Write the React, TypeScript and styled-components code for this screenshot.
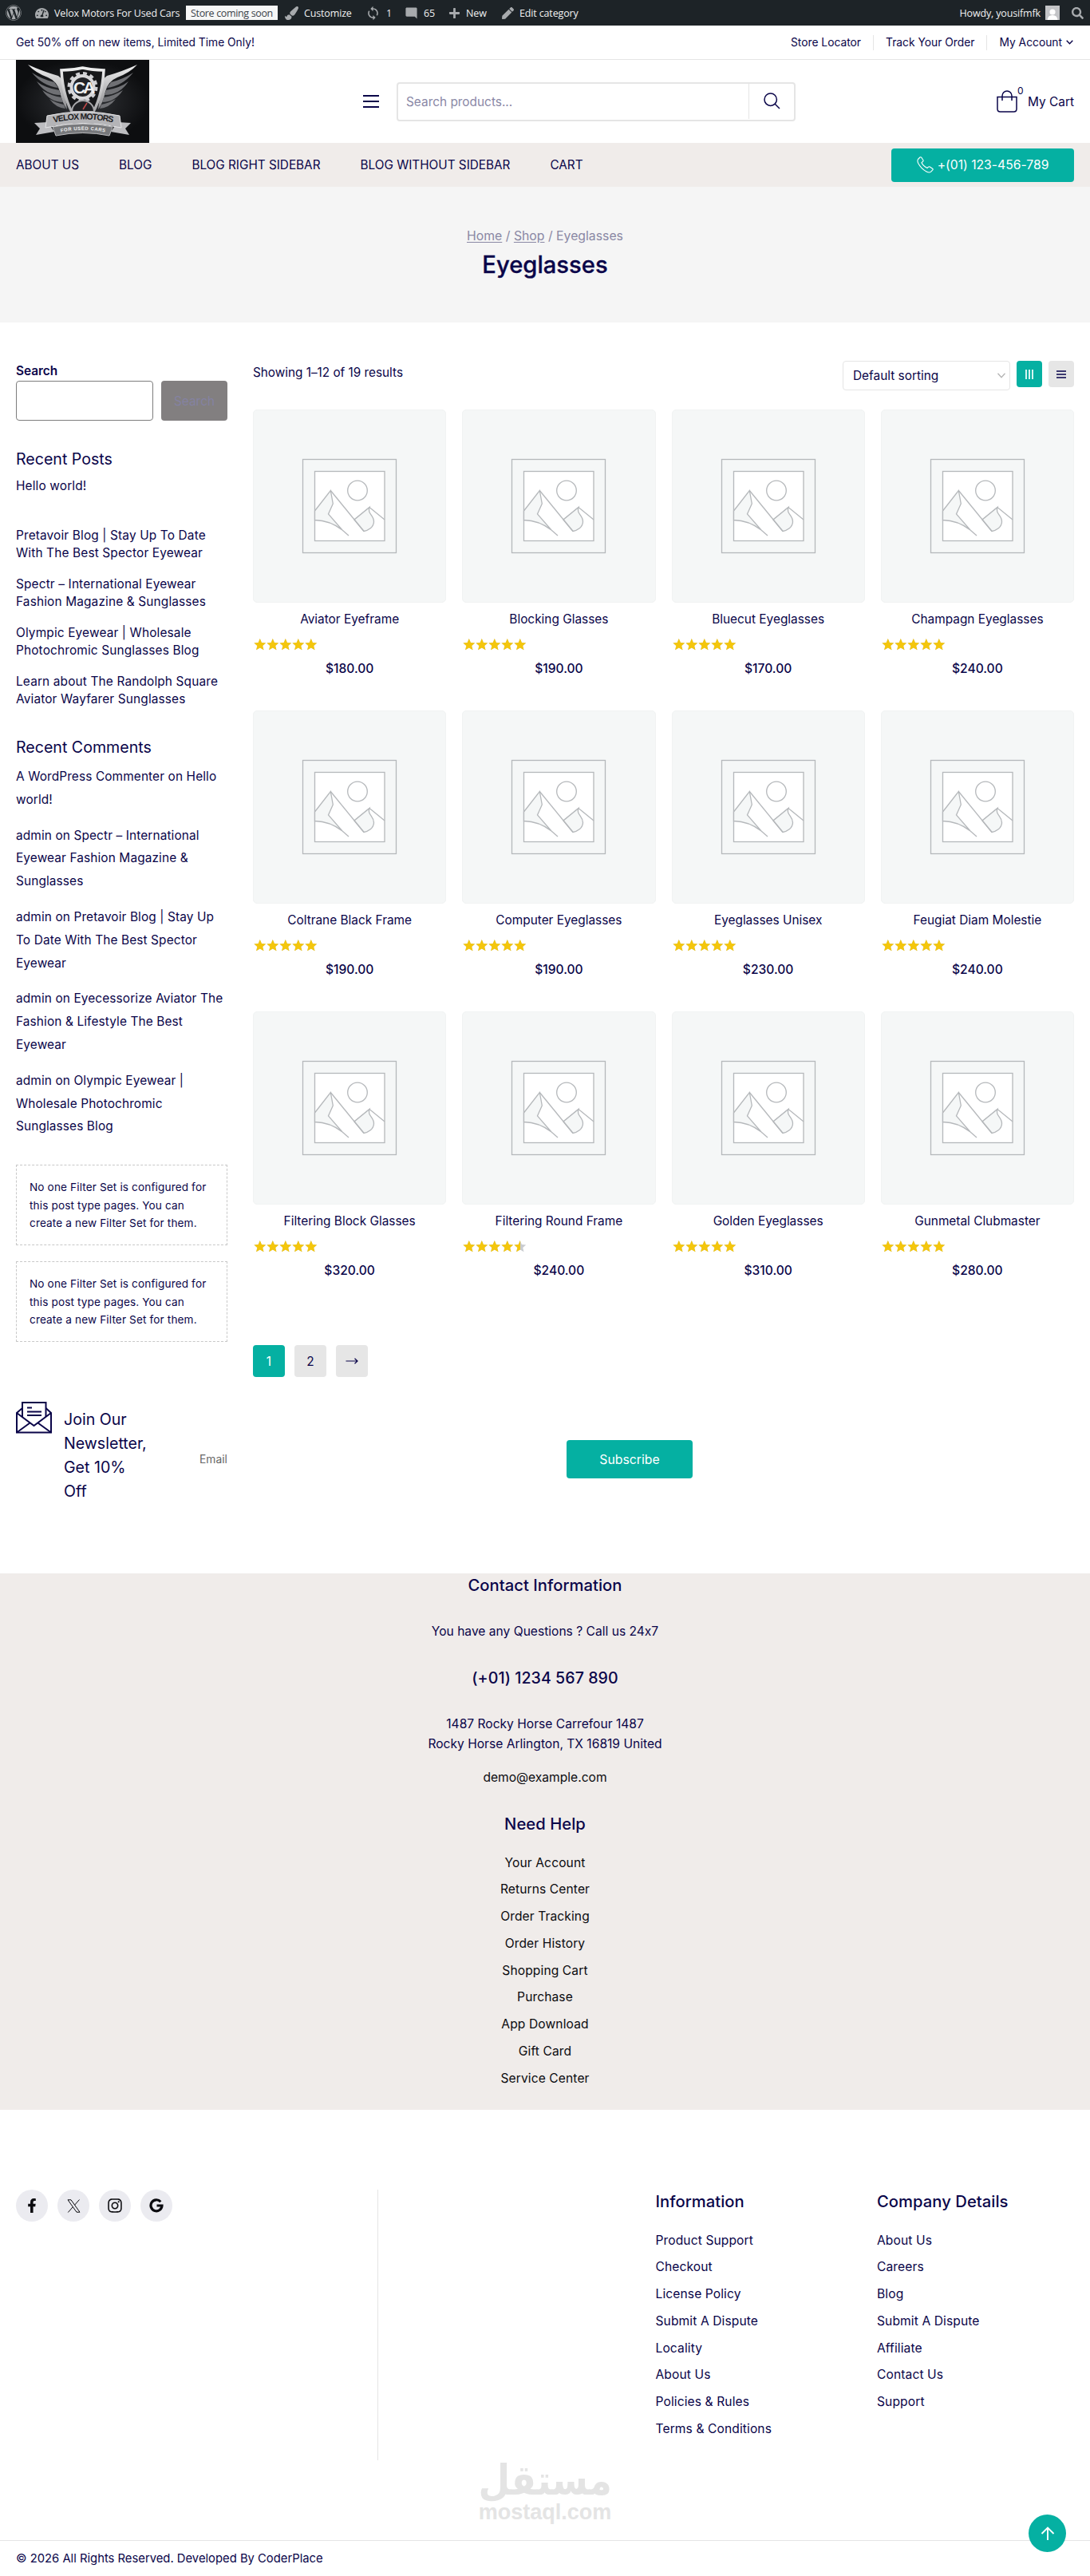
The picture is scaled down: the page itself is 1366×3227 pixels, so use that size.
import type { ReactNode } from "react";
import styled, { createGlobalStyle } from "styled-components";
import {
  FaWordpress,
  FaTachometerAlt,
  FaPaintBrush,
  FaPlus,
  FaPen,
  FaSearch,
  FaFacebookF,
  FaInstagram,
} from "react-icons/fa";
import { MdSync, MdModeComment } from "react-icons/md";

interface Product {
  id: number;
  name: string;
  price: number;
  rating: number;
}

const products: Product[] = [
  { id: 1, name: "Aviator Eyeframe", price: 180, rating: 5 },
  { id: 2, name: "Blocking Glasses", price: 190, rating: 5 },
  { id: 3, name: "Bluecut Eyeglasses", price: 170, rating: 5 },
  { id: 4, name: "Champagn Eyeglasses", price: 240, rating: 5 },
  { id: 5, name: "Coltrane Black Frame", price: 190, rating: 5 },
  { id: 6, name: "Computer Eyeglasses", price: 190, rating: 5 },
  { id: 7, name: "Eyeglasses Unisex", price: 230, rating: 5 },
  { id: 8, name: "Feugiat Diam Molestie", price: 240, rating: 5 },
  { id: 9, name: "Filtering Block Glasses", price: 320, rating: 5 },
  { id: 10, name: "Filtering Round Frame", price: 240, rating: 4.5 },
  { id: 11, name: "Golden Eyeglasses", price: 310, rating: 5 },
  { id: 12, name: "Gunmetal Clubmaster", price: 280, rating: 5 },
];

const menu = ["ABOUT US", "BLOG", "BLOG RIGHT SIDEBAR", "BLOG WITHOUT SIDEBAR", "CART"];

const posts = [
  ["Pretavoir Blog | Stay Up To Date", "With The Best Spector Eyewear"],
  ["Spectr – International Eyewear", "Fashion Magazine & Sunglasses"],
  ["Olympic Eyewear | Wholesale", "Photochromic Sunglasses Blog"],
  ["Learn about The Randolph Square", "Aviator Wayfarer Sunglasses"],
];

const comments = [
  ["A WordPress Commenter on Hello", "world!"],
  ["admin on Spectr – International", "Eyewear Fashion Magazine &", "Sunglasses"],
  ["admin on Pretavoir Blog | Stay Up", "To Date With The Best Spector", "Eyewear"],
  ["admin on Eyecessorize Aviator The", "Fashion & Lifestyle The Best", "Eyewear"],
  ["admin on Olympic Eyewear |", "Wholesale Photochromic", "Sunglasses Blog"],
];

const helpLinks = [
  "Your Account",
  "Returns Center",
  "Order Tracking",
  "Order History",
  "Shopping Cart",
  "Purchase",
  "App Download",
  "Gift Card",
  "Service Center",
];

const informationLinks = [
  "Product Support",
  "Checkout",
  "License Policy",
  "Submit A Dispute",
  "Locality",
  "About Us",
  "Policies & Rules",
  "Terms & Conditions",
];

const companyLinks = [
  "About Us",
  "Careers",
  "Blog",
  "Submit A Dispute",
  "Affiliate",
  "Contact Us",
  "Support",
];

const navy = "#0a0549";
const teal = "#05b0a2";
const sand = "#f0ecea";
const line = "#e5e5e5";

const GlobalStyle = createGlobalStyle`
  * {
    box-sizing: border-box;
  }

  body {
    margin: 0;
    background: #fff;
    color: ${navy};
    font-family: Inter, "Liberation Sans", sans-serif;
    font-size: 15.4px;
    font-feature-settings: "calt" 0;
  }

  h1, h2, h3, p, ul {
    margin: 0;
    padding: 0;
    font-weight: 400;
  }

  ul {
    list-style: none;
  }

  button, input {
    font: inherit;
    color: inherit;
  }

  svg {
    display: block;
    flex: none;
  }
`;

const Page = styled.div`
  position: relative;
  width: 1366px;
  height: 3227px;
  overflow: hidden;
`;

/* WordPress admin bar */

const AdminBar = styled.div`
  display: flex;
  align-items: center;
  height: 32px;
  padding: 0 8px 0 7px;
  background: #1d2327;
  color: #f0f0f1;
  font-family: "Open Sans", "Noto Sans", sans-serif;
  font-size: 12.5px;
  letter-spacing: -0.15px;
  white-space: nowrap;

  svg {
    color: #a7aaad;
  }
`;

const AdminItem = styled.div<{ $left: number; $width?: number }>`
  display: flex;
  align-items: center;
  gap: 7px;
  margin-left: ${({ $left }) => $left}px;
  width: ${({ $width }) => ($width ? `${$width}px` : "auto")};
`;

const StoreBadge = styled.span`
  display: flex;
  align-items: center;
  justify-content: center;
  width: 115px;
  height: 18px;
  margin-left: 7px;
  background: #f6f7f7;
  color: #3c434a;
  letter-spacing: -0.35px;
`;

const AdminRight = styled.div`
  display: flex;
  align-items: center;
  gap: 6px;
  margin-left: auto;
`;

const Avatar = styled.svg`
  margin-right: 9px;
`;

/* Header */

const TopBar = styled.div`
  display: flex;
  align-items: center;
  justify-content: space-between;
  height: 43px;
  padding: 0 20px;
  border-bottom: 1px solid ${line};
  font-size: 13.8px;
`;

const TopLinks = styled.div`
  display: flex;
  align-items: center;
`;

const TopLink = styled.a`
  display: flex;
  align-items: center;
  gap: 5px;
  height: 19px;
  padding: 0 15px;
  border-left: 1px solid ${line};

  &:first-child {
    border-left: 0;
  }

  &:last-child {
    padding-right: 1px;
  }
`;

const HeaderRow = styled.div`
  display: flex;
  align-items: center;
  height: 104px;
  padding: 0 20px;
`;

const MenuIcon = styled.div`
  display: flex;
  flex-direction: column;
  gap: 5px;
  width: 20px;
  margin-left: 268px;

  span {
    height: 2px;
    background: ${navy};
  }
`;

const SearchBox = styled.div`
  display: flex;
  width: 500px;
  height: 49px;
  margin-left: 22px;
  border: 2px solid ${line};
  border-radius: 4px;
`;

const SearchInput = styled.div`
  flex: 1;
  padding-left: 10px;
  color: #8a88a6;
  line-height: 46px;
`;

const SearchIcon = styled.div`
  display: flex;
  align-items: center;
  justify-content: center;
  width: 57px;
  height: 44px;
  border-left: 1px solid ${line};
`;

const Cart = styled.div`
  display: flex;
  align-items: center;
  margin-left: auto;
`;

const CartCount = styled.span`
  align-self: flex-start;
  width: 13px;
  font-size: 12px;
  line-height: 12px;
  margin-top: -5px;
`;

const Nav = styled.nav`
  display: flex;
  align-items: center;
  gap: 50px;
  height: 55px;
  padding: 0 20px;
  background: ${sand};
  font-size: 15.3px;
`;

const PhoneButton = styled.a`
  display: flex;
  align-items: center;
  justify-content: center;
  gap: 5px;
  width: 229px;
  height: 42px;
  margin-left: auto;
  border-radius: 4px;
  background: ${teal};
  color: #fff;
  font-size: 15.7px;
`;

const Hero = styled.section`
  display: flex;
  flex-direction: column;
  align-items: center;
  height: 170px;
  padding-top: 49px;
  background: #f5f5f5;
`;

const Breadcrumb = styled.div`
  color: #8a88a4;
  font-size: 15.8px;
  line-height: 26px;

  a {
    text-decoration: underline;
    text-underline-offset: 2px;
  }
`;

const HeroTitle = styled.h1`
  margin-top: 3px;
  font-size: 29.2px;
  font-weight: 500;
  line-height: 40px;
  -webkit-text-stroke: 0.3px ${navy};
`;

/* Shop layout */

const Shop = styled.div`
  display: grid;
  grid-template-columns: 265px 1029px;
  gap: 32px;
  height: 1352px;
  padding: 48px 20px 0;
`;

const SearchLabel = styled.label`
  display: block;
  font-weight: 600;
  line-height: 26px;
  height: 25px;
`;

const SidebarSearch = styled.div`
  display: flex;
  gap: 10px;

  input {
    width: 172px;
    height: 50px;
    border: 1px solid #7d7d7d;
    border-radius: 4px;
    background: #fff;
  }

  button {
    width: 83px;
    height: 50px;
    padding: 0;
    border: 0;
    border-radius: 4px;
    background: #827f80;
    color: #8482a2;
  }
`;

const WidgetTitle = styled.h2<{ $top: number }>`
  margin-top: ${({ $top }) => $top}px;
  font-size: 19.6px;
  line-height: 30px;
`;

const PostList = styled.ul`
  margin-top: 8px;
  line-height: 22px;
  letter-spacing: 0.15px;
  white-space: nowrap;

  li {
    margin-bottom: 17px;
  }

  li:first-child {
    margin-bottom: 39.5px;
  }

  span {
    display: block;
  }
`;

const CommentList = styled.ul`
  display: flex;
  flex-direction: column;
  gap: 16px;
  margin-top: 8.6px;
  line-height: 28.8px;
  letter-spacing: 0.12px;
  white-space: nowrap;

  span {
    display: block;
  }
`;

const FilterNotice = styled.p<{ $top: number }>`
  height: 101px;
  margin-top: ${({ $top }) => $top}px;
  padding: 16px;
  border: 1px dashed #c8c8c8;
  font-size: 13.6px;
  line-height: 22.4px;
  letter-spacing: 0.13px;
  white-space: nowrap;
`;

const Toolbar = styled.div`
  display: flex;
  align-items: flex-start;
  height: 61px;
`;

const ResultCount = styled.p`
  margin-right: auto;
  font-size: 15.3px;
  line-height: 30px;
`;

const SortSelect = styled.div`
  display: flex;
  align-items: center;
  justify-content: space-between;
  width: 210px;
  height: 37px;
  padding: 0 5px 0 12px;
  border: 1px solid ${line};
  border-radius: 4px;
`;

const ViewButton = styled.div<{ $active?: boolean }>`
  display: flex;
  align-items: center;
  justify-content: center;
  width: 32px;
  height: 33px;
  margin-left: 8px;
  border-radius: 4px;
  background: ${({ $active }) => ($active ? teal : "#e6e6e6")};
`;

const ProductGrid = styled.div`
  display: grid;
  grid-template-columns: repeat(4, 1fr);
  grid-auto-rows: 377px;
  column-gap: 20px;
`;

const ProductImage = styled.div`
  height: 242px;
  border: 1px solid #f1f3f3;
  border-radius: 5px;
  background: #f5f7f7;
`;

const ProductName = styled.h3`
  margin-top: 8px;
  font-size: 15.4px;
  line-height: 26px;
  text-align: center;
`;

const StarsRow = styled.div`
  position: relative;
  width: 80px;
  height: 15px;
  margin: 11px 0 0 1px;
`;

const StarsFill = styled.div`
  position: absolute;
  inset: 0 auto 0 0;
  overflow: hidden;
`;

const Price = styled.p`
  margin-top: 10px;
  font-weight: 500;
  font-size: 15.6px;
  line-height: 26px;
  text-align: center;
`;

const Pagination = styled.div`
  display: flex;
  gap: 12px;
  margin-top: 41px;
`;

const PageLink = styled.a<{ $active?: boolean }>`
  display: flex;
  align-items: center;
  justify-content: center;
  width: 40px;
  height: 40px;
  border-radius: 4px;
  background: ${({ $active }) => ($active ? teal : "#e6e6e6")};
  color: ${({ $active }) => ($active ? "#fff" : navy)};
`;

/* Newsletter */

const Newsletter = styled.section`
  display: flex;
  align-items: flex-start;
  height: 215px;
  padding: 0 20px;
`;

const NewsletterTitle = styled.h3`
  width: 170px;
  margin: 7px 0 0 15px;
  font-size: 19.6px;
  line-height: 30px;

  span {
    display: block;
  }
`;

const EmailField = styled.div`
  width: 460px;
  margin-top: 62px;
  color: #666;
  font-size: 13.8px;
  line-height: 20px;
`;

const SubscribeButton = styled.button`
  width: 158px;
  height: 48px;
  margin-top: 48px;
  padding: 0;
  border: 0;
  border-radius: 4px;
  background: ${teal};
  color: #fff;
  font-size: 15.8px;
`;

/* Contact and footer */

const Contact = styled.section`
  display: flex;
  flex-direction: column;
  align-items: center;
  height: 672px;
  background: ${sand};
  text-align: center;
`;

const SectionTitle = styled.h2<{ $top?: number }>`
  margin-top: ${({ $top = 0 }) => $top}px;
  font-size: 20.2px;
  font-weight: 500;
  line-height: 30px;
  letter-spacing: 0.05px;
`;

const ContactPhone = styled(SectionTitle)`
  font-size: 19.6px;
`;

const ContactText = styled.p<{ $top: number; $dark?: boolean }>`
  margin-top: ${({ $top }) => $top}px;
  color: ${({ $dark }) => ($dark ? "#0b0b0f" : navy)};
  font-size: 15.6px;
  line-height: 25px;
`;

const LinkList = styled.ul<{ $dark?: boolean }>`
  margin-top: 16.6px;
  color: ${({ $dark }) => ($dark ? "#0b0b0f" : navy)};
  font-size: 15.6px;
  letter-spacing: 0.1px;

  li {
    height: 33.75px;
    line-height: 33.75px;
  }
`;

const Footer = styled.footer`
  display: flex;
  padding: 100px 20px 0;
`;

const Socials = styled.div`
  display: flex;
  gap: 12px;
  width: 454px;
  height: 339px;
  border-right: 1px solid ${line};
`;

const SocialLink = styled.a`
  display: flex;
  align-items: center;
  justify-content: center;
  width: 40px;
  height: 40px;
  border-radius: 50%;
  background: #ebebf0;
  color: #0b0b0f;
`;

const FooterColumn = styled.div<{ $left?: number; $width: number }>`
  width: ${({ $width }) => $width}px;
  margin-left: ${({ $left = 0 }) => $left}px;
`;

const Watermark = styled.div`
  display: flex;
  flex-direction: column;
  align-items: center;
  height: 100px;
  color: #e4e4e4;
  font-weight: 700;
  white-space: nowrap;
`;

const WatermarkArabic = styled.span`
  height: 50px;
  font-family: "DejaVu Sans", sans-serif;
  font-size: 52px;
  line-height: 50px;
  transform: scaleX(0.88);
`;

const WatermarkLatin = styled.span`
  height: 30px;
  font-family: "Liberation Sans", sans-serif;
  font-size: 27px;
  line-height: 30px;
`;

const Copyright = styled.div`
  height: 45px;
  padding: 0 20px;
  border-top: 1px solid ${line};
  font-size: 14.8px;
  line-height: 44px;
`;

const ScrollTop = styled.button`
  position: absolute;
  right: 30px;
  bottom: 30px;
  display: flex;
  align-items: center;
  justify-content: center;
  width: 47px;
  height: 47px;
  padding: 0;
  border: 0;
  border-radius: 50%;
  background: ${teal};
  color: #fff;
`;

const Logo = () => (
  <svg width="167" height="104" viewBox="0 0 167 104">
    <defs>
      <radialGradient id="logoBg">
        <stop offset="0" stopColor="#34363a" />
        <stop offset="1" stopColor="#0d0e10" />
      </radialGradient>
      <linearGradient id="steel" x1="0" y1="0" x2="0" y2="1">
        <stop offset="0" stopColor="#efefef" />
        <stop offset="1" stopColor="#8d8d90" />
      </linearGradient>
    </defs>
    <rect width="167" height="104" fill="url(#logoBg)" />
    {[undefined, "translate(167 0) scale(-1 1)"].map((transform, i) => (
      <g key={i} transform={transform}>
        <path d="M15 6Q35 15 53 20Q60 24 61 40L64 62Q58 54 55 40Q52 27 40 22Q24 16 15 6Z" fill="url(#steel)" />
        <path d="M20 16Q32 24 48 28L53 35Q34 33 20 16ZM26 27Q36 35 54 38L56 44Q37 44 26 27ZM33 38Q44 45 57 47L59 53Q43 53 33 38ZM42 49Q50 54 60 56L62 61Q50 60 42 49Z" fill="#6f7074" />
        <path d="M40 78L23 79L30 86L25 94L48 90Z" fill="#bdbdc0" />
      </g>
    ))}
    <path d="M57 13Q71 13 83.500 10Q96 13 110 13Q108 49 93 72L84 82L74 72Q59 49 57 13Z" fill="#17181a" stroke="url(#steel)" strokeWidth="3.500" />
    <circle cx="83.500" cy="34" r="17" fill="none" stroke="#cfcfd2" strokeWidth="4" strokeDasharray="4.900 4" />
    <circle cx="83.500" cy="34" r="14" fill="#222326" stroke="#d8d8da" strokeWidth="4" />
    <text x="72" y="42" fill="#f2f2f2" fontSize="21" fontWeight="700" fontFamily="Liberation Sans, sans-serif" letterSpacing="-3">
      CA
    </text>
    <path d="M70 65A14 14 0 0 1 98 65Z" fill="#202124" stroke="#a8a8ab" strokeWidth="2" />
    <path d="M84 62L89 54" stroke="#c34a4a" strokeWidth="1.500" />
    <path d="M46 84Q84 76 121 84L117 95Q84 88 50 95Z" fill="#77787b" stroke="#bcbcbe" />
    <path d="M39 70Q84 60 130 70L132 85Q84 74 37 85Z" fill="#b4b4b7" stroke="#e4e4e6" />
    <path id="ribbonTop" d="M45 79Q84 70 124 79" fill="none" />
    <path id="ribbonLow" d="M52 91.500Q84 84 116 91.500" fill="none" />
    <text fill="#1d1d1f" fontSize="10.500" fontWeight="700" fontFamily="Liberation Sans, sans-serif">
      <textPath href="#ribbonTop" startOffset="50%" textAnchor="middle" textLength="75">
        VELOX MOTORS
      </textPath>
    </text>
    <text fill="#f0f0f0" fontSize="6" fontWeight="700" fontFamily="Liberation Sans, sans-serif">
      <textPath href="#ribbonLow" startOffset="50%" textAnchor="middle" textLength="56">
        FOR USED CARS
      </textPath>
    </text>
  </svg>
);

const Placeholder = () => (
  <svg width="240" height="240" viewBox="1 1 240 240" fill="none" stroke="#b5b8bb" strokeWidth="1.300">
    <rect x="62.500" y="62.500" width="117" height="117" />
    <rect x="77.500" y="77.500" width="87.500" height="87" fill="#fff" />
    <circle cx="131" cy="101.500" r="12.300" />
    <path d="M77.500 127L97.300 101.500L100.300 118L94.500 131L112 151Q97 139 77.500 138.500Z" fill="#f5f7f7" />
    <path d="M112 151L120 158" />
    <path d="M127 138L146 122.500L165 138" />
    <path d="M127 138L146 122.500C143 131 152 132 151.500 141C151 148 144 151.500 139 152.500Z" fill="#f5f7f7" />
    <path d="M97.300 101.500L139 152.500" />
  </svg>
);

const FiveStars = ({ color }: { color: string }) => (
  <svg width="80" height="15" viewBox="0 0 80 15" fill={color}>
    {[0, 16, 32, 48, 64].map((x) => (
      <path
        key={x}
        transform={`translate(${x} 0)`}
        d="M7.800 0L9.900 4.900L15.200 5.400L11.200 8.900L12.500 14.300L7.800 11.500L3.100 14.300L4.400 8.900L0.400 5.400L5.700 4.900Z"
      />
    ))}
  </svg>
);

const Stars = ({ rating }: { rating: number }) => (
  <StarsRow>
    <FiveStars color="#c9ccd0" />
    <StarsFill style={{ width: `${(rating / 5) * 100}%` }}>
      <FiveStars color="#f4c60c" />
    </StarsFill>
  </StarsRow>
);

const EnvelopeIcon = () => (
  <svg width="45" height="40" viewBox="0 0 45 40" fill="none" stroke={navy} strokeWidth="2">
    <path d="M8 19V1H37.500V19" />
    <path d="M8 8L1 14V38.500H44V14L37.500 8" />
    <path d="M1 14L22.500 30L44 14M1 38.500L17.500 26.500M44 38.500L27.500 26.500" />
    <path d="M14 7.500H20M14 12.500H32M14 17H32" />
  </svg>
);

const Lines = ({ rows }: { rows: string[] }) => (
  <>
    {rows.map((row) => (
      <span key={row}>{row}</span>
    ))}
  </>
);

const Notice = ({ top }: { top: number }): ReactNode => (
  <FilterNotice $top={top}>
    No one Filter Set is configured for
    <br />
    this post type pages. You can
    <br />
    create a new Filter Set for them.
  </FilterNotice>
);

export default function App() {
  return (
    <Page>
      <GlobalStyle />

      <AdminBar>
        <FaWordpress size={20} />
        <AdminItem $left={17} $width={182}>
          <FaTachometerAlt size={17} />
          Velox Motors For Used Cars
        </AdminItem>
        <StoreBadge>Store coming soon</StoreBadge>
        <AdminItem $left={9} $width={101}>
          <FaPaintBrush size={17} />
          Customize
        </AdminItem>
        <AdminItem $left={0} $width={49}>
          <MdSync size={19} />1
        </AdminItem>
        <AdminItem $left={0} $width={55}>
          <MdModeComment size={17} />
          65
        </AdminItem>
        <AdminItem $left={0} $width={67}>
          <FaPlus size={15} />
          New
        </AdminItem>
        <AdminItem $left={0}>
          <FaPen size={15} />
          Edit category
        </AdminItem>
        <AdminRight>
          Howdy, yousifmfk
          <Avatar width="18" height="18" viewBox="0 0 18 18">
            <rect width="18" height="18" fill="#c3c4c7" />
            <circle cx="9" cy="8" r="3.600" fill="#fff" />
            <path d="M2.500 18Q3 12 9 12Q15 12 15.500 18Z" fill="#fff" />
          </Avatar>
          <FaSearch size={15} />
        </AdminRight>
      </AdminBar>

      <TopBar>
        <span>Get 50% off on new items, Limited Time Only!</span>
        <TopLinks>
          <TopLink>Store Locator</TopLink>
          <TopLink>Track Your Order</TopLink>
          <TopLink>
            My Account
            <svg width="9" height="6" viewBox="0 0 9 6" fill="none" stroke={navy} strokeWidth="1.400">
              <path d="M0.700 0.700L4.500 4.700L8.300 0.700" />
            </svg>
          </TopLink>
        </TopLinks>
      </TopBar>

      <HeaderRow>
        <Logo />
        <MenuIcon>
          <span />
          <span />
          <span />
        </MenuIcon>
        <SearchBox>
          <SearchInput>Search products...</SearchInput>
          <SearchIcon>
            <svg width="21" height="21" viewBox="0 0 21 21" fill="none" stroke={navy} strokeWidth="1.500">
              <circle cx="8.700" cy="8.700" r="7.700" />
              <path d="M14 14L20 20" />
            </svg>
          </SearchIcon>
        </SearchBox>
        <Cart>
          <svg width="26" height="28" viewBox="0 0 26 28" fill="none" stroke={navy} strokeWidth="1.500">
            <path d="M1 8.500H25V23.500Q25 27 21.500 27H4.500Q1 27 1 23.500Z" />
            <path d="M7 13V7A6 6 0 0 1 19 7V13" />
          </svg>
          <CartCount>0</CartCount>
          My Cart
        </Cart>
      </HeaderRow>

      <Nav>
        {menu.map((item) => (
          <a key={item}>{item}</a>
        ))}
        <PhoneButton>
          <svg width="21" height="21" viewBox="0 0 21 21" fill="none" stroke="#fff" strokeWidth="1.100">
            <path d="M1.500 3.500L4 1Q5 .3 5.800 1.300L8 4.700Q8.400 5.700 7.400 6.500L6 7.700Q7.500 11.500 13 14.500L14.500 13.200Q15.400 12.500 16.300 13L19.600 15.200Q20.700 16 19.800 17L17.500 19.400Q15.500 20.800 12 18.900Q5.500 15.500 1.700 8.500Q0.300 5.500 1.500 3.500Z" />
          </svg>
          +(01) 123-456-789
        </PhoneButton>
      </Nav>

      <Hero>
        <Breadcrumb>
          <a>Home</a> / <a>Shop</a> / Eyeglasses
        </Breadcrumb>
        <HeroTitle>Eyeglasses</HeroTitle>
      </Hero>

      <Shop>
        <aside>
          <SearchLabel>Search</SearchLabel>
          <SidebarSearch>
            <input />
            <button>Search</button>
          </SidebarSearch>

          <WidgetTitle $top={33}>Recent Posts</WidgetTitle>
          <PostList>
            <li>Hello world!</li>
            {posts.map((post) => (
              <li key={post[0]}>
                <Lines rows={post} />
              </li>
            ))}
          </PostList>

          <WidgetTitle $top={34}>Recent Comments</WidgetTitle>
          <CommentList>
            {comments.map((comment) => (
              <li key={comment[0]}>
                <Lines rows={comment} />
              </li>
            ))}
          </CommentList>

          <Notice top={33} />
          <Notice top={20} />
        </aside>

        <main>
          <Toolbar>
            <ResultCount>Showing 1–12 of 19 results</ResultCount>
            <SortSelect>
              Default sorting
              <svg width="10" height="7" viewBox="0 0 10 7" fill="none" stroke="#b4b4b4" strokeWidth="1.300">
                <path d="M0.500 0.700L5 5.700L9.500 0.700" />
              </svg>
            </SortSelect>
            <ViewButton $active>
              <svg width="10" height="12" viewBox="0 0 10 12" fill="#d5f5f1">
                <path d="M0 0H2V12H0ZM4 0H6V12H4ZM8 0H10V12H8Z" />
              </svg>
            </ViewButton>
            <ViewButton>
              <svg width="12" height="10" viewBox="0 0 12 10" fill="#3c3970">
                <path d="M0 0H12V2H0ZM0 4H12V6H0ZM0 8H12V10H0Z" />
              </svg>
            </ViewButton>
          </Toolbar>

          <ProductGrid>
            {products.map((product) => (
              <div key={product.id}>
                <ProductImage>
                  <Placeholder />
                </ProductImage>
                <ProductName>{product.name}</ProductName>
                <Stars rating={product.rating} />
                <Price>{`$${product.price.toFixed(2)}`}</Price>
              </div>
            ))}
          </ProductGrid>

          <Pagination>
            <PageLink $active>1</PageLink>
            <PageLink>2</PageLink>
            <PageLink aria-label="Next page">
              <svg width="16" height="8" viewBox="0 0 16 8" fill="none" stroke={navy} strokeWidth="1.200">
                <path d="M0.500 4H15M11.500 0.800L15 4L11.500 7.200" />
              </svg>
            </PageLink>
          </Pagination>
        </main>
      </Shop>

      <Newsletter>
        <EnvelopeIcon />
        <NewsletterTitle>
          <Lines rows={["Join Our", "Newsletter,", "Get 10%", "Off"]} />
        </NewsletterTitle>
        <EmailField>Email</EmailField>
        <SubscribeButton>Subscribe</SubscribeButton>
      </Newsletter>

      <Contact>
        <SectionTitle>Contact Information</SectionTitle>
        <ContactText $top={30}>You have any Questions ? Call us 24x7</ContactText>
        <ContactPhone $top={30.5}>(+01) 1234 567 890</ContactPhone>
        <ContactText $top={30}>
          1487 Rocky Horse Carrefour 1487
          <br />
          Rocky Horse Arlington, TX 16819 United
        </ContactText>
        <ContactText $top={17} $dark>
          demo@example.com
        </ContactText>
        <SectionTitle $top={31.5}>Need Help</SectionTitle>
        <LinkList $dark>
          {helpLinks.map((link) => (
            <li key={link}>{link}</li>
          ))}
        </LinkList>
      </Contact>

      <Footer>
        <Socials>
          <SocialLink>
            <FaFacebookF size={18} />
          </SocialLink>
          <SocialLink>
            <svg width="17" height="17" viewBox="0 0 17 17" fill="none" stroke="#0b0b0f">
              <path d="M1 0.800H5L16 16.200H12ZM15.500 0.500L9.500 7.300M7.300 9.700L1.300 16.500" />
            </svg>
          </SocialLink>
          <SocialLink>
            <FaInstagram size={20} />
          </SocialLink>
          <SocialLink>
            <svg width="18" height="18" viewBox="0 0 18 18" fill="none" stroke="#0b0b0f" strokeWidth="3.200">
              <path d="M14.300 4.200A7 7 0 1 0 16 9H9.500" />
            </svg>
          </SocialLink>
        </Socials>
        <FooterColumn $left={347.5} $width={277.5}>
          <SectionTitle>Information</SectionTitle>
          <LinkList>
            {informationLinks.map((link) => (
              <li key={link}>{link}</li>
            ))}
          </LinkList>
        </FooterColumn>
        <FooterColumn $width={220}>
          <SectionTitle>Company Details</SectionTitle>
          <LinkList>
            {companyLinks.map((link) => (
              <li key={link}>{link}</li>
            ))}
          </LinkList>
        </FooterColumn>
      </Footer>

      <Watermark>
        <WatermarkArabic lang="ar" dir="rtl">
          مستقل
        </WatermarkArabic>
        <WatermarkLatin>mostaql.com</WatermarkLatin>
      </Watermark>

      <Copyright>© 2026 All Rights Reserved. Developed By CoderPlace</Copyright>

      <ScrollTop>
        <svg width="18" height="18" viewBox="0 0 18 18" fill="none" stroke="currentColor" strokeWidth="1.900">
          <path d="M9 17V1.500M1.500 9L9 1.500L16.500 9" />
        </svg>
      </ScrollTop>
    </Page>
  );
}
